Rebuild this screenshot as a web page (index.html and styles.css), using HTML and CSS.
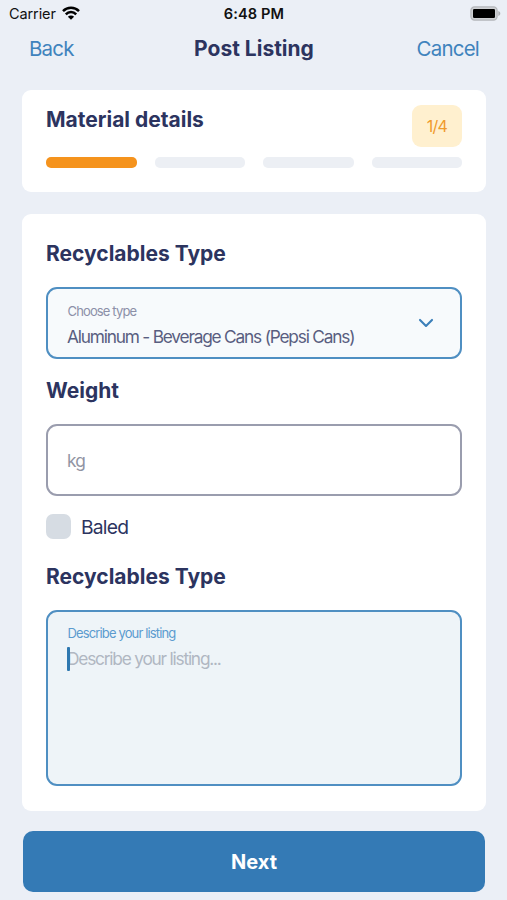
FILE: index.html
```html
<!DOCTYPE html>
<html lang="en">
<head>
<meta charset="utf-8">
<title>Post Listing</title>
<link rel="stylesheet" href="styles.css">
</head>
<body>
<div class="status">
  <div class="status-left">
    <span class="carrier">Carrier</span>
    <svg class="wifi" width="18" height="14" viewBox="0 0 18 14" fill="none" stroke="#000" stroke-width="2.5">
      <path d="M1 5.1a11.3 11.3 0 0 1 16 0"/>
      <path d="M3.8 8.3a7.3 7.3 0 0 1 10.4 0"/>
      <path d="M9 13.7 5.9 10.7a4.4 4.4 0 0 1 6.2 0z" fill="#000" stroke="none"/>
    </svg>
  </div>
  <span class="time">6:48 PM</span>
  <svg class="battery" width="31" height="15" viewBox="0 0 31 15">
    <rect x=".9" y=".9" width="26.2" height="13.2" rx="3.6" fill="#cfd1d4" stroke="#b4b6ba" stroke-width="1.2"/>
    <rect x="3" y="3" width="22" height="9" rx="1.2" fill="#000"/>
    <path d="M28.3 5c1.3.4 2 1.4 2 2.5s-.7 2.1-2 2.5z" fill="#aeb0b4"/>
  </svg>
</div>
<header class="nav">
  <a class="back">Back</a>
  <h1 class="title">Post Listing</h1>
  <a class="cancel">Cancel</a>
</header>
<main>
  <section class="card progress">
    <div class="progress-head">
      <h2 class="details">Material details</h2>
      <span class="badge"><span class="step">1/4</span></span>
    </div>
    <div class="bars"><i class="bar active"></i><i class="bar"></i><i class="bar"></i><i class="bar"></i></div>
  </section>
  <section class="card form">
    <h2><span class="type-heading">Recyclables Type</span></h2>
    <div class="field select">
      <div class="selected">
        <div class="label"><span class="choose">Choose type</span></div>
        <div class="value"><span class="material">Aluminum - Beverage Cans (Pepsi Cans)</span></div>
      </div>
      <svg width="16" height="10" viewBox="0 0 16 10" fill="none" stroke="#3b7fb9" stroke-width="2.1" stroke-linecap="round" stroke-linejoin="round"><path d="m2 1.9 6 6 6-6"/></svg>
    </div>
    <h2><span class="weight">Weight</span></h2>
    <div class="field input"><span class="kg">kg</span></div>
    <div class="check"><i class="box"></i><span class="baled">Baled</span></div>
    <h2><span class="type-heading">Recyclables Type</span></h2>
    <div class="field area">
      <div class="label blue"><span class="describe">Describe your listing</span></div>
      <div class="value hint"><i class="caret"></i><span class="placeholder">Describe your listing...</span></div>
    </div>
  </section>
  <div class="next"><span class="next-text">Next</span></div>
</main>
</body>
</html>
```
FILE: styles.css
```css
* { box-sizing: border-box; }
body {
  margin: 0;
  height: 900px;
  overflow: hidden;
  background: #ebeff6;
  font-family: Inter, "Liberation Sans", sans-serif;
  color: #2c345f;
}
h1, h2 { margin: 0; font-weight: 700; }
span, a { white-space: nowrap; }
.status {
  display: grid;
  grid-template-columns: 1fr auto 1fr;
  align-items: center;
  height: 27px;
  padding: 0 6px 0 9px;
  color: #111;
}
.status-left { display: flex; align-items: center; gap: 6px; }
.carrier { font-size: 14.5px; letter-spacing: -0.1px; }
.wifi { margin-top: -1px; }
.time { margin-left: -2px; font-size: 14.6px; font-weight: 600; letter-spacing: 0.1px; }
.battery { justify-self: end; }
.nav {
  display: grid;
  grid-template-columns: 1fr auto 1fr;
  align-items: center;
  height: 43px;
  padding: 0 28px 0 29px;
  color: #2c345f;
}
.back, .cancel { font-size: 20.5px; letter-spacing: -0.8px; color: #3f83bd; }
.cancel { justify-self: end; }
.title { font-size: 21px; line-height: 42px; }
main { padding: 20px 21px 0 22px; }
.card { background: #fff; border-radius: 9px; }
.progress { height: 102px; padding: 15px 24px 24px; }
.progress-head { display: flex; justify-content: space-between; align-items: flex-start; }
.details { font-size: 21px; line-height: 30px; }
.badge {
  display: flex;
  align-items: center;
  justify-content: center;
  width: 50px;
  height: 42px;
  border-radius: 9px;
  background: #fff0cf;
  color: #f09a2c;
  font-size: 16px;
  letter-spacing: -0.7px;
}
.bars { display: grid; grid-template-columns: repeat(4, 1fr); gap: 18px; margin-top: 10px; }
.bar { height: 11px; border-radius: 5px; background: #eceff4; }
.bar.active { background: #f5931d; }
.form { height: 597px; margin-top: 22px; padding: 25px 24px 24px; }
.form h2 { font-size: 21px; line-height: 30px; }
.field { border: 2px solid #4f8fc2; border-radius: 11px; padding: 0 19px; }
.select {
  display: flex;
  align-items: center;
  justify-content: space-between;
  height: 72px;
  margin: 18px 0 17px;
  padding-right: 26px;
  background: #f7fafc;
}
.selected { padding-top: 8px; }
.label { font-size: 13px; line-height: 20px; letter-spacing: -0.86px; color: #8c90a8; }
.choose, .describe { margin-left: 0.5px; }
.blue { color: #5b9bcf; }
.value { font-size: 17.3px; line-height: 32px; letter-spacing: -1.2px; color: #595e80; }
.input {
  display: flex;
  align-items: center;
  height: 72px;
  margin-top: 18px;
  padding-top: 1px;
  border-color: #9a9dae;
  font-size: 17.3px;
  letter-spacing: -0.8px;
  color: #9194a3;
}
.check {
  display: flex;
  align-items: center;
  gap: 10px;
  height: 25px;
  margin: 18px 0 23px;
  font-size: 19.3px;
  letter-spacing: -0.8px;
}
.baled { padding-top: 1px; }
.box { width: 25px; height: 25px; border-radius: 7px; background: #d6dce3; }
.area { height: 176px; margin-top: 18px; padding-top: 11px; background: #eef4f8; }
.hint { display: flex; align-items: center; height: 31px; color: #b0b7c2; }
.caret { z-index: 1; width: 3px; height: 24px; margin-right: -3px; border-radius: 1px; background: #2e78b0; }
.next {
  display: flex;
  align-items: center;
  justify-content: center;
  height: 61px;
  margin: 20px 1px 0;
  border-radius: 10px;
  background: #347ab5;
  color: #fff;
  font-size: 20px;
  font-weight: 700;
}
```
